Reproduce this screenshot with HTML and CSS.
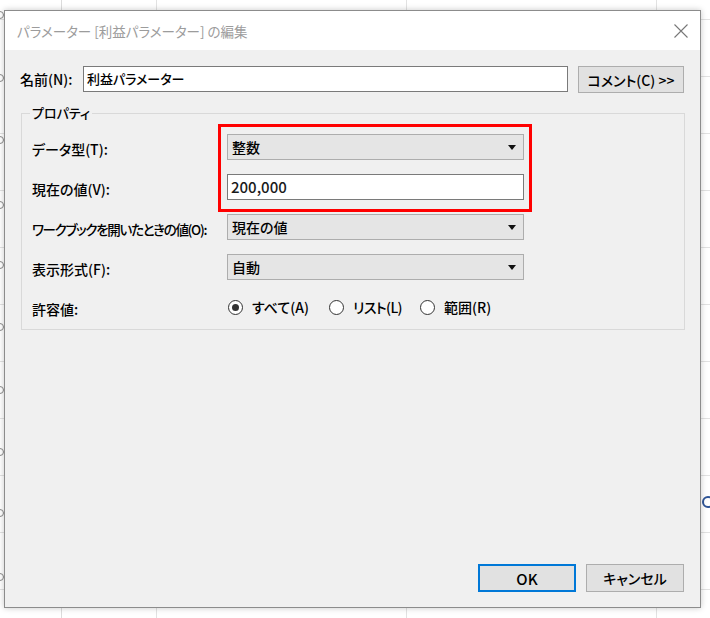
FILE: index.html
```html
<!DOCTYPE html>
<html lang="ja">
<head>
<meta charset="utf-8">
<title>パラメーターの編集</title>
<link rel="stylesheet" href="styles.css">
</head>
<body>
<div class="sheet">
  <span class="handle" style="top:11px"></span>
  <span class="handle" style="top:74px"></span>
  <span class="handle" style="top:136px"></span>
  <span class="handle" style="top:201px"></span>
  <span class="handle" style="top:261px"></span>
  <span class="handle" style="top:323px"></span>
  <span class="handle" style="top:386px"></span>
  <span class="handle" style="top:448px"></span>
  <span class="handle" style="top:509px"></span>
  <span class="handle" style="top:573px"></span>
  <span class="handle blue" style="top:496px; left:702px"></span>

  <div class="dialog">
    <div class="titlebar">
      <span class="title">パラメーター [利益パラメーター] の編集</span>
      <svg class="close" width="14" height="14" viewBox="0 0 14 14"><path d="M0.5 0.5 L13.5 13.5 M13.5 0.5 L0.5 13.5" stroke="#777" stroke-width="1.1" fill="none"/></svg>
    </div>
    <div class="body">
      <div class="name-row">
        <span class="name-label">名前(N):</span>
        <div class="textbox name-input">利益パラメーター</div>
        <div class="button comment">コメント(C) &gt;&gt;</div>
      </div>

      <fieldset class="group">
        <legend>プロパティ</legend>
        <div class="grid">
          <span class="label">データ型(T):</span>
          <div class="combo">整数<span class="arrow"></span></div>

          <span class="label">現在の値(V):</span>
          <div class="textbox value">200,000</div>

          <span class="label long">ワークブックを開いたときの値(O):</span>
          <div class="combo">現在の値<span class="arrow"></span></div>

          <span class="label">表示形式(F):</span>
          <div class="combo">自動<span class="arrow"></span></div>

          <span class="label">許容値:</span>
          <div class="radios">
            <span class="radio checked"><span class="dot"></span>すべて(A)</span>
            <span class="radio"><span class="dot"></span>リスト(L)</span>
            <span class="radio"><span class="dot"></span>範囲(R)</span>
          </div>
        </div>
      </fieldset>

      <div class="buttons">
        <div class="button ok">OK</div>
        <div class="button cancel">キャンセル</div>
      </div>
    </div>
    <div class="highlight"></div>
  </div>
</div>
</body>
</html>
```

FILE: styles.css
```css
* { box-sizing: border-box; }

html, body {
  margin: 0;
  padding: 0;
  width: 710px;
  height: 618px;
  overflow: hidden;
}

body {
  font-family: "Noto Sans CJK JP", "Noto Sans", sans-serif;
  font-size: 14px;
  font-weight: 500;
  font-feature-settings: "palt";
  color: #000;
  background-color: #fff;
  background-image:
    linear-gradient(to right, transparent 61px, #dcdcdc 61px, #dcdcdc 62px, transparent 62px),
    repeating-linear-gradient(to right, transparent 0, transparent 156px, #e2e2e2 156px, #e2e2e2 157px, transparent 157px, transparent 250px),
    repeating-linear-gradient(to bottom, transparent 0, transparent 19px, #e2e2e2 19px, #e2e2e2 20px, transparent 20px, transparent 57px);
}

.sheet {
  position: relative;
  width: 710px;
  height: 618px;
  padding: 10px 0 0 4px;
}

.handle {
  position: absolute;
  left: -4px;
  width: 8px;
  height: 8px;
  border: 1px solid #8a8a8a;
  border-radius: 50%;
  background: #fff;
}
.handle.blue {
  width: 12px;
  height: 12px;
  border: 2px solid #2f5597;
}

.dialog {
  position: relative;
  width: 697px;
  height: 598px;
  border: 1px solid #8c8c8c;
  background: #f0f0f0;
  box-shadow: 0 0 6px rgba(0, 0, 0, 0.22);
  display: flex;
  flex-direction: column;
}

.titlebar {
  height: 39px;
  background: #fff;
  display: flex;
  align-items: center;
  justify-content: space-between;
  padding: 0 12px 0 12px;
}

.title {
  color: #9c9c9c;
  font-size: 13.5px;
  font-weight: 400;
  white-space: nowrap;
}

.close { display: block; }

.body {
  flex: 1;
  display: flex;
  flex-direction: column;
  padding: 16px 15px 15px 15px;
}

.name-row {
  display: flex;
  align-items: flex-start;
  height: 27px;
}

.name-label {
  width: 63px;
  line-height: 26px;
  white-space: nowrap;
}

.textbox {
  height: 26px;
  background: #fff;
  border: 1px solid #7a7a7a;
  line-height: 24px;
  padding-left: 3px;
}

.name-input {
  width: 485px;
  font-size: 13px;
}

.button {
  height: 28px;
  background: #e1e1e1;
  border: 1px solid #adadad;
  display: flex;
  align-items: center;
  justify-content: center;
  white-space: nowrap;
}

.comment {
  width: 106px;
  height: 27px;
  margin-left: 10px;
}

.group {
  margin: 11px 0 0 1px;
  padding: 12px 8px 9px 8px;
  border: 1px solid #d9d9d9;
  min-width: 0;
}

.group legend {
  padding: 0 2px;
  line-height: 18px;
  font-size: 13px;
}

.grid {
  display: grid;
  grid-template-columns: 195px 297px;
  grid-auto-rows: 26px;
  row-gap: 14px;
  padding-left: 2px;
  align-items: center;
}

.label {
  padding-top: 3px;
  white-space: nowrap;
}

.label.long {
  font-size: 13.5px;
  letter-spacing: -1.3px;
}

.combo {
  height: 26px;
  background: #e5e5e5;
  border: 1px solid #adadad;
  line-height: 24px;
  padding-left: 4px;
  display: flex;
  align-items: center;
  justify-content: space-between;
  padding-right: 7px;
}

.arrow {
  width: 0;
  height: 0;
  border-left: 4.5px solid transparent;
  border-right: 4.5px solid transparent;
  border-top: 5px solid #111;
}

.value {
  font-size: 15px;
  color: #1a1a1a;
}

.radios {
  display: flex;
  align-items: center;
  padding-left: 1px;
}

.radio {
  display: flex;
  align-items: center;
  margin-right: 20px;
  white-space: nowrap;
}

.radio:nth-child(2) {
  margin-right: 18px;
  letter-spacing: -0.6px;
}

.radio .dot {
  width: 15px;
  height: 15px;
  border: 1px solid #333;
  border-radius: 50%;
  background: #fff;
  margin-right: 9px;
  display: flex;
  align-items: center;
  justify-content: center;
}

.radio.checked .dot::after {
  content: "";
  width: 7px;
  height: 7px;
  border-radius: 50%;
  background: #333;
}

.buttons {
  margin-top: auto;
  display: flex;
  justify-content: flex-end;
  gap: 10px;
  padding-right: 1px;
}

.ok, .cancel { width: 98px; }

.ok {
  border: 2px solid #0078d7;
  font-size: 15px;
}

.highlight {
  position: absolute;
  left: 213px;
  top: 113px;
  width: 314px;
  height: 88px;
  border: 3px solid #f00;
}
```
